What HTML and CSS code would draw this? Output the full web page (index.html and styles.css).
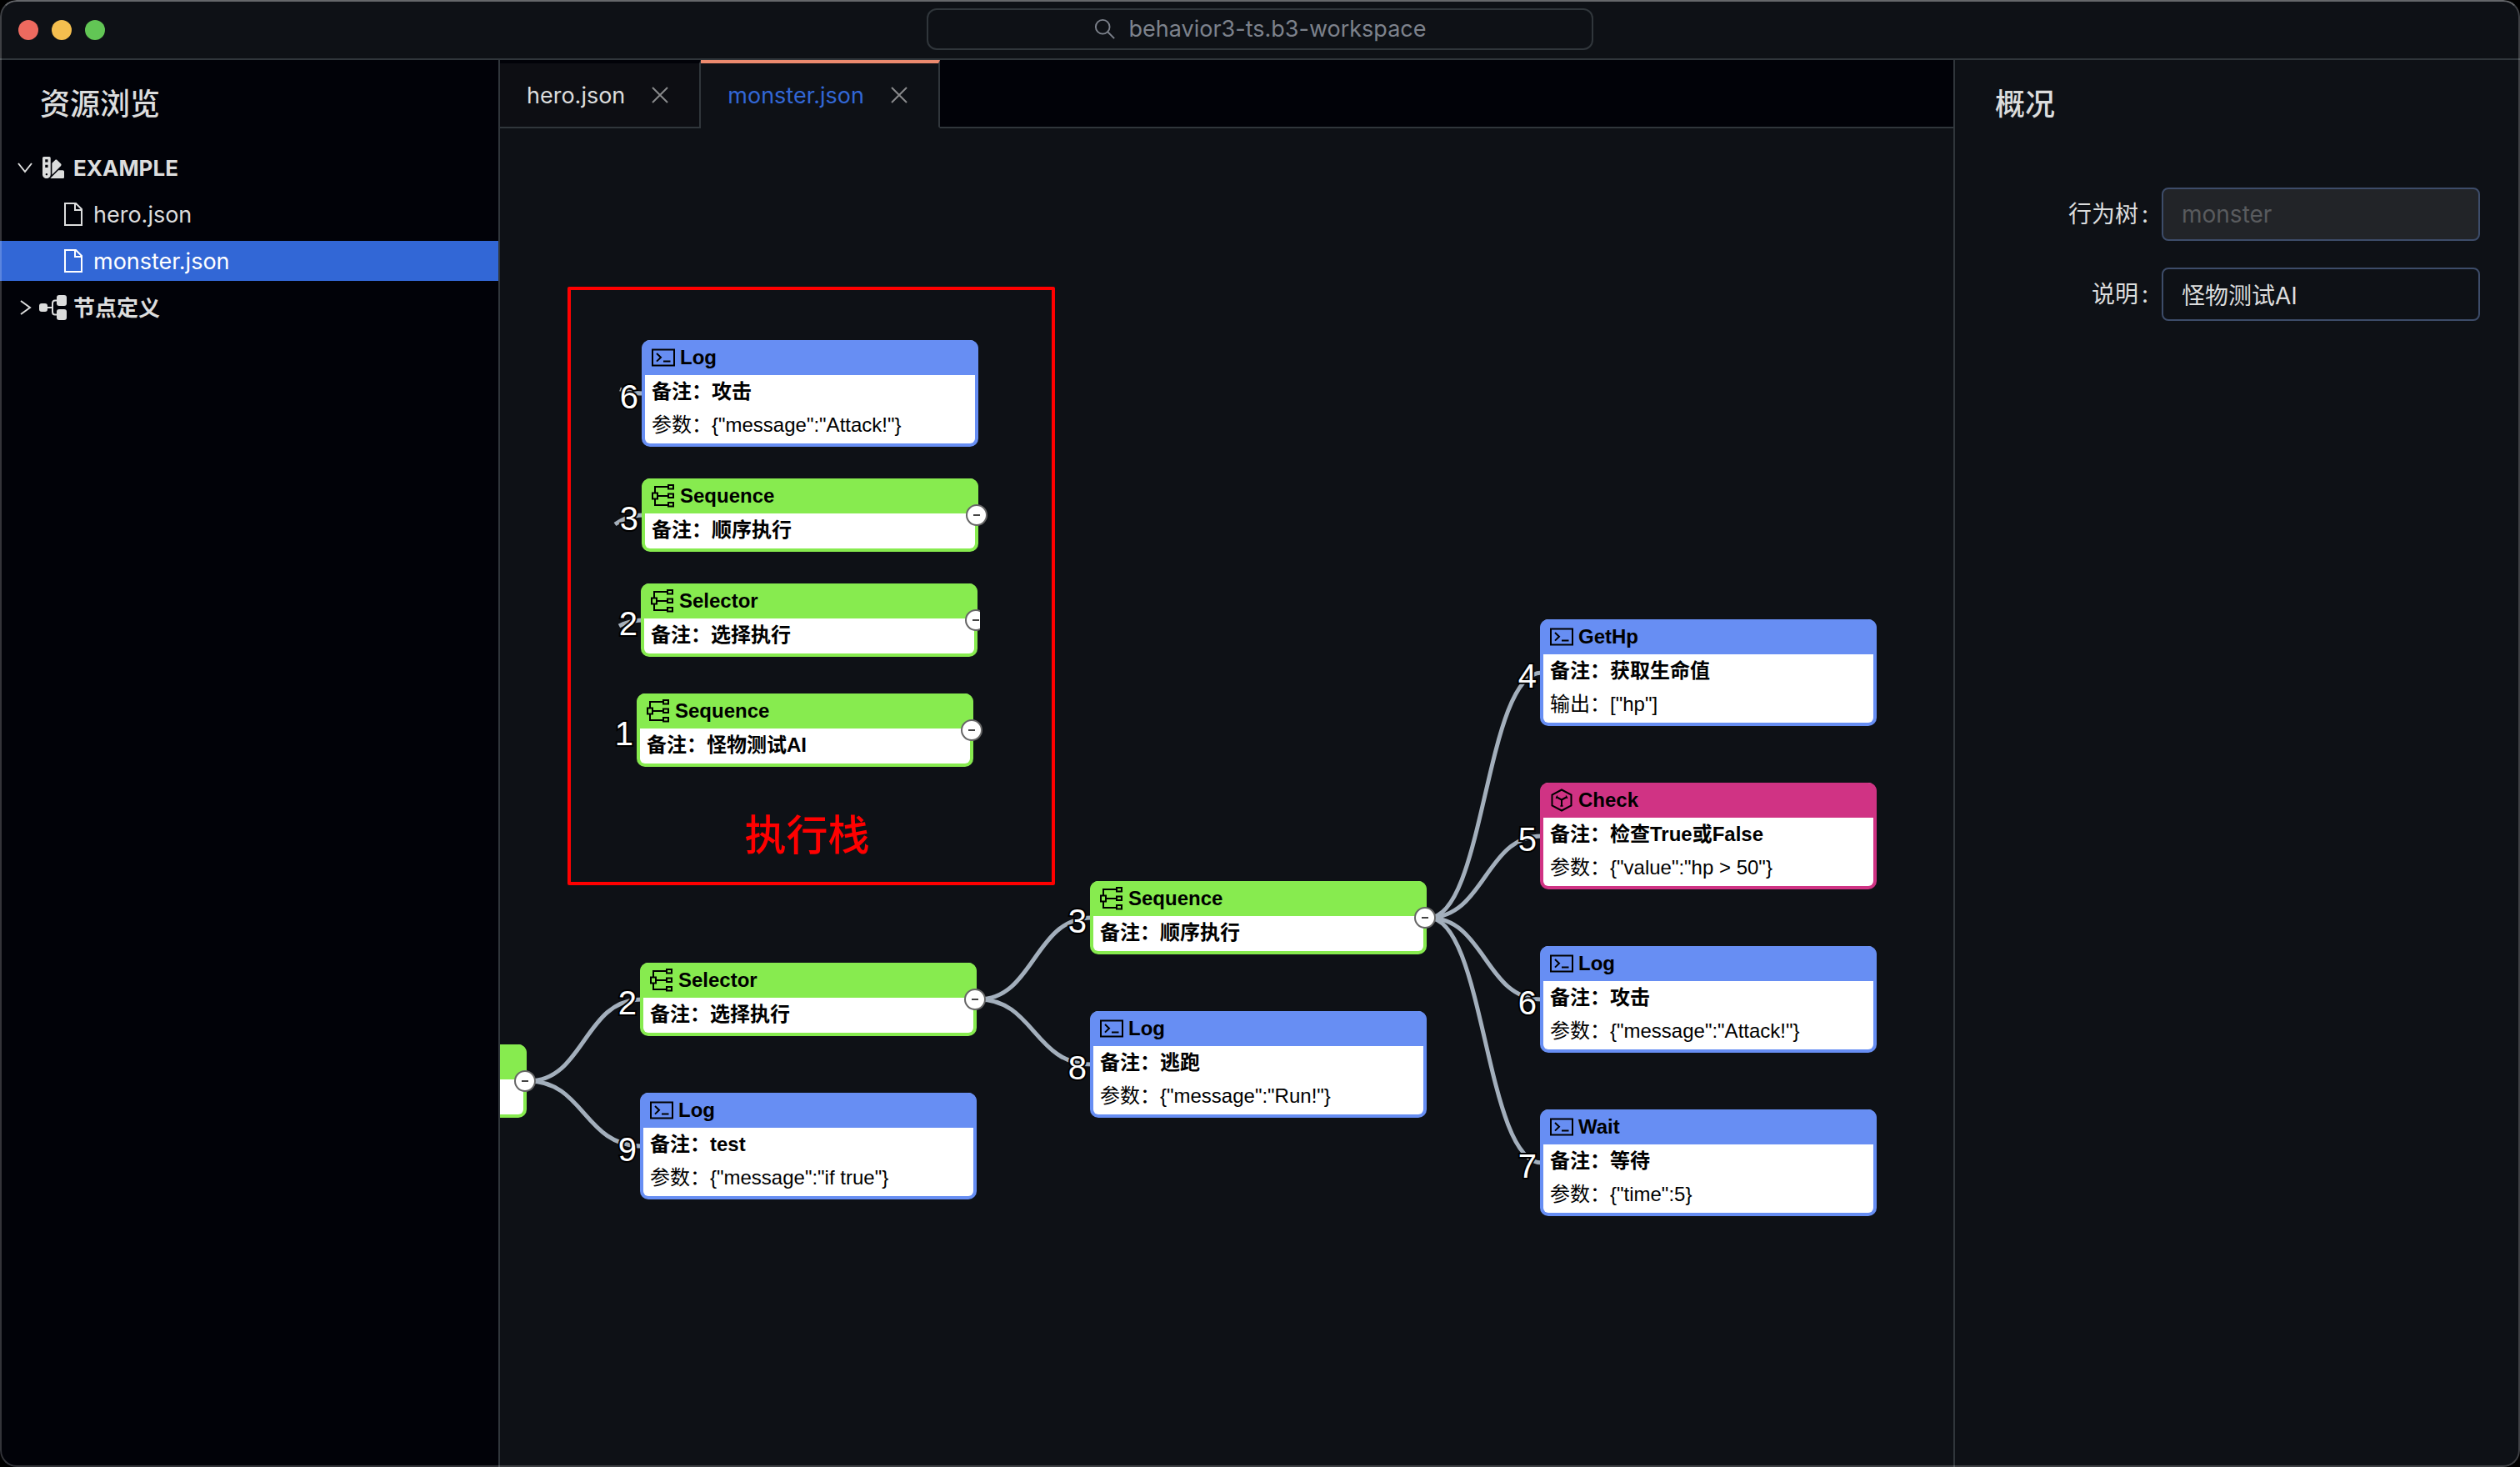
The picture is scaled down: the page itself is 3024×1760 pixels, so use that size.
FILE: index.html
```html
<!DOCTYPE html>
<html lang="zh-CN">
<head>
<meta charset="utf-8">
<title>behavior3-ts.b3-workspace</title>
<link rel="stylesheet" href="styles.css">
</head>
<body>
<svg class="sprite" aria-hidden="true">
  <symbol id="i-tree" viewBox="0 0 28 28">
    <path d="M8 14H20M4 10V3H20M4 18V25H20" />
    <path d="M1 10.500h6v7h-6zM20 1h6v4.500h-6zM20 11.500h6v4.500h-6zM20 22h6v4.500h-6z" />
  </symbol>
  <symbol id="i-console" viewBox="0 0 28 28">
    <path d="M1 4.500H27V23.500H1z" /><path d="M6 9l5 4.800-5 4.800M14 18.500h8.500" />
  </symbol>
  <symbol id="i-cube" viewBox="0 0 28 28">
    <path d="M14 1.500L25.500 7.500V20.500L14 26.500L2.500 20.500V7.500z" />
    <path d="M14 21.500V13.500L7.500 10M14 13.500L20.500 10" />
    <path d="M14 20.500v1M7.500 10l1 .500M20.500 10l-1 .500" stroke-width="4" />
  </symbol>
  <symbol id="i-file" viewBox="0 0 24 30">
    <path d="M2 2H15L22 9V28H2zM14 2V10H22" />
  </symbol>
  <symbol id="i-close" viewBox="0 0 20 20"><path d="M1 1L19 19M19 1L1 19" /></symbol>
</svg>

<div class="window">
  <header class="titlebar">
    <div class="lights"><i class="red"></i><i class="yellow"></i><i class="green"></i></div>
    <button class="search" type="button">
      <svg viewBox="0 0 28 28"><circle cx="11" cy="11" r="9" /><path d="M17.500 17.500L26 26" /></svg>
      <span>behavior3-ts.b3-workspace</span>
    </button>
    <div></div>
  </header>

  <div class="workbench">
    <nav class="explorer">
      <h1 class="pane-title">资源浏览</h1>
      <ul class="files">
        <li class="row folder">
          <svg class="arrow" viewBox="0 0 18 18"><path d="M1 4L9 14L17 4" /></svg>
          <svg class="glyph swatch" viewBox="0 0 512 512"><path fill-rule="evenodd" d="M0 32C0 14.300 14.300 0 32 0H160c17.700 0 32 14.300 32 32V416c0 53-43 96-96 96s-96-43-96-96V32zM223.600 425.900c.3-3.300.4-6.600.4-9.900V154l75.400-75.400c12.500-12.500 32.800-12.500 45.300 0l90.500 90.500c12.500 12.500 12.500 32.800 0 45.300L223.600 425.900zM182.800 512l192-192H480c17.700 0 32 14.300 32 32V480c0 17.700-14.300 32-32 32H182.800zM128 64H64v64h64V64zM64 192v64h64V192H64zM96 440a24 24 0 1 0 0-48 24 24 0 1 0 0 48z" /></svg>
          <span>EXAMPLE</span>
        </li>
        <li class="row file"><svg><use href="#i-file" /></svg><a href="#hero">hero.json</a></li>
        <li class="row file selected"><svg><use href="#i-file" /></svg><a href="#monster">monster.json</a></li>
        <li class="row folder">
          <svg class="arrow" viewBox="0 0 18 18"><path d="M4 1L15 9L4 17" /></svg>
          <svg class="glyph" viewBox="0 0 34 34">
            <rect x="0" y="12" width="10" height="10" rx="3" /><rect x="21" y="2" width="12" height="13" rx="3" /><rect x="21" y="19" width="12" height="13" rx="3" />
            <path class="wire" d="M9 17H16M22 8.500H19Q16 8.500 16 12V22Q16 25.500 19 25.500H22" />
          </svg>
          <span>节点定义</span>
        </li>
      </ul>
    </nav>

    <main class="editor">
      <div class="tabs" role="tablist">
        <div class="tab" role="tab"><span>hero.json</span><button type="button" aria-label="关闭 hero.json"><svg><use href="#i-close" /></svg></button></div>
        <div class="tab active" role="tab" aria-selected="true"><span>monster.json</span><button type="button" aria-label="关闭 monster.json"><svg><use href="#i-close" /></svg></button></div>
        <div class="tab-rest"></div>
      </div>

      <div class="canvas">
        <svg class="edges">
          <path d="M34 1143C101 1143 101 1045 170 1045" />
          <path d="M34 1143C101 1143 101 1221 170 1221" />
          <path d="M574 1045C641 1045 641 947 710 947" />
          <path d="M574 1045C641 1045 641 1123 710 1123" />
          <path d="M1114 947C1182 947 1182 653 1250 653" />
          <path d="M1114 947C1182 947 1182 849 1250 849" />
          <path d="M1114 947C1182 947 1182 1045 1250 1045" />
          <path d="M1114 947C1182 947 1182 1241 1250 1241" />
          <path d="M144 313Q158 318 172 318" />
          <path d="M138 475Q154 464 172 464" />
          <path d="M143 597Q156 590 172 590" />
        </svg>

        <section class="stack"><h2>执行栈</h2></section>

        <article class="node blue at-stack-log">
          <b class="order">6</b>
          <h3><svg><use href="#i-console" /></svg>Log</h3>
          <p class="note">备注：攻击</p><p>参数：{"message":"Attack!"}</p>
        </article>
        <article class="node green at-stack-sequence">
          <b class="order">3</b>
          <h3><svg><use href="#i-tree" /></svg>Sequence</h3>
          <p class="note">备注：顺序执行</p>
          <button class="fold" type="button" aria-label="收起"></button>
        </article>
        <article class="node green at-stack-selector">
          <b class="order">2</b>
          <h3><svg><use href="#i-tree" /></svg>Selector</h3>
          <p class="note">备注：选择执行</p>
          <button class="fold cut" type="button" aria-label="收起"></button>
        </article>
        <article class="node green at-stack-root">
          <b class="order">1</b>
          <h3><svg><use href="#i-tree" /></svg>Sequence</h3>
          <p class="note">备注：怪物测试AI</p>
          <button class="fold" type="button" aria-label="收起"></button>
        </article>

        <article class="node green at-root">
          <h3></h3>
          <p class="note"></p>
          <button class="fold" type="button" aria-label="收起"></button>
        </article>
        <article class="node green at-selector">
          <b class="order">2</b>
          <h3><svg><use href="#i-tree" /></svg>Selector</h3>
          <p class="note">备注：选择执行</p>
          <button class="fold" type="button" aria-label="收起"></button>
        </article>
        <article class="node blue at-test">
          <b class="order">9</b>
          <h3><svg><use href="#i-console" /></svg>Log</h3>
          <p class="note">备注：test</p><p>参数：{"message":"if true"}</p>
        </article>
        <article class="node green at-sequence">
          <b class="order">3</b>
          <h3><svg><use href="#i-tree" /></svg>Sequence</h3>
          <p class="note">备注：顺序执行</p>
          <button class="fold" type="button" aria-label="收起"></button>
        </article>
        <article class="node blue at-run">
          <b class="order">8</b>
          <h3><svg><use href="#i-console" /></svg>Log</h3>
          <p class="note">备注：逃跑</p><p>参数：{"message":"Run!"}</p>
        </article>
        <article class="node blue at-gethp">
          <b class="order">4</b>
          <h3><svg><use href="#i-console" /></svg>GetHp</h3>
          <p class="note">备注：获取生命值</p><p>输出：["hp"]</p>
        </article>
        <article class="node pink at-check">
          <b class="order">5</b>
          <h3><svg><use href="#i-cube" /></svg>Check</h3>
          <p class="note">备注：检查True或False</p><p>参数：{"value":"hp &gt; 50"}</p>
        </article>
        <article class="node blue at-attack">
          <b class="order">6</b>
          <h3><svg><use href="#i-console" /></svg>Log</h3>
          <p class="note">备注：攻击</p><p>参数：{"message":"Attack!"}</p>
        </article>
        <article class="node blue at-wait">
          <b class="order">7</b>
          <h3><svg><use href="#i-console" /></svg>Wait</h3>
          <p class="note">备注：等待</p><p>参数：{"time":5}</p>
        </article>
      </div>
    </main>

    <aside class="inspector">
      <h1 class="pane-title">概况</h1>
      <form class="fields">
        <label for="tree-name">行为树<span class="colon">:</span></label>
        <input id="tree-name" type="text" value="monster" disabled>
        <label for="tree-desc">说明<span class="colon">:</span></label>
        <input id="tree-desc" type="text" value="怪物测试AI">
      </form>
    </aside>
  </div>
</div>
</body>
</html>
```
FILE: styles.css
```css
* { box-sizing: border-box; margin: 0; padding: 0; }

body {
  background: #000;
  color: #dcdddd;
  font: 28px/44px Inter, "Noto Sans CJK SC", sans-serif;
}
button { background: none; border: 0; font: inherit; color: inherit; }
a { color: inherit; text-decoration: none; }
ul { list-style: none; }
svg { fill: none; stroke: currentColor; stroke-width: 2; flex: none; display: block; }
.sprite { position: absolute; width: 0; height: 0; }

.window {
  position: relative;
  display: flex;
  flex-direction: column;
  height: 100vh;
  overflow: hidden;
  border-radius: 20px;
  background: #0e1116;
}
.window::after {
  content: "";
  position: absolute;
  inset: 0;
  border: 2px solid rgba(255, 255, 255, .2);
  border-top-color: rgba(255, 255, 255, .36);
  border-radius: 20px;
  pointer-events: none;
}

/* title bar */
.titlebar {
  display: grid;
  grid-template-columns: 1fr 800px 1fr;
  align-items: center;
  height: 72px;
  flex: none;
  border-bottom: 2px solid #30363b;
}
.lights { display: flex; gap: 16px; padding: 2px 0 0 22px; }
.lights i { width: 24px; height: 24px; border-radius: 50%; }
.lights .red { background: #ed6a5f; }
.lights .yellow { background: #f5bf4f; }
.lights .green { background: #62c655; }
.search {
  display: flex;
  align-items: center;
  justify-content: center;
  gap: 16px;
  height: 50px;
  border: 2px solid #30363b;
  border-radius: 12px;
  color: #7d828c;
  font-size: 27px;
}
.search svg { width: 26px; height: 26px; }

.workbench { display: flex; flex: 1; min-height: 0; }

.pane-title {
  padding: 31px 48px 30px;
  font-size: 36px;
  line-height: 44px;
  font-weight: 500;
}

/* explorer */
.explorer { width: 600px; flex: none; background: #010208; border-right: 2px solid #30363b; }
.files { display: flex; flex-direction: column; gap: 8px; }
.row { display: flex; align-items: center; height: 48px; }
.row span, .row a { padding-top: 2px; }
.folder { padding-left: 21px; font-size: 26px; font-weight: 700; }
.folder span { padding-left: 7px; }
.arrow { width: 18px; height: 18px; }
.glyph { width: 34px; height: 34px; margin-left: 8px; fill: currentColor; stroke: none; }
.swatch { padding: 4px; }
.wire { fill: none; stroke: currentColor; stroke-width: 2; }
.file { gap: 12px; padding-left: 76px; font-size: 27px; }
.file svg { width: 24px; height: 30px; }
.selected { background: #3267d6; color: #fff; }

/* tabs */
.editor { display: flex; flex-direction: column; flex: 1; min-width: 0; }
.tabs { display: flex; height: 82px; flex: none; background: #010208; font-size: 27px; }
.tab {
  display: flex;
  align-items: center;
  gap: 32px;
  padding: 0 37px 0 32px;
  background: #0d0e13;
  border-top: 4px solid #010208;
  border-right: 2px solid #30363b;
  border-bottom: 2px solid #30363b;
}
.tab.active { background: #0e1116; border-top-color: #ec8a6e; border-bottom-color: #0e1116; color: #3267d6; }
.tab span { padding-top: 2px; }
.tab button { width: 20px; height: 20px; color: #8a8b8d; }
.tab svg { width: 20px; height: 20px; }
.tab-rest { flex: 1; border-bottom: 2px solid #30363b; }

/* tree canvas */
.canvas { position: relative; flex: 1; overflow: hidden; }
.edges { position: absolute; inset: 0; width: 100%; height: 100%; stroke: #a3afbc; stroke-width: 5; }
.stack {
  position: absolute;
  left: 81px;
  top: 190px;
  width: 585px;
  height: 718px;
  display: flex;
  align-items: flex-end;
  justify-content: center;
  padding: 0 10px 20px 0;
  border: 4px solid #f00;
  border-radius: 2px;
}
.stack h2 { color: #f00; font-size: 50px; line-height: 72px; font-weight: 500; }

.node {
  position: absolute;
  width: 404px;
  padding-bottom: 2px;
  border: 4px solid var(--tone);
  border-top: 0;
  border-radius: 10px;
  background: #fff;
  color: #000;
  font: 24px/40px "Liberation Sans", "Noto Sans CJK SC", sans-serif;
}
.node.blue { --tone: #678ef3; }
.node.green { --tone: #87eb4f; }
.node.pink { --tone: #d03384; }
.node h3 {
  display: flex;
  align-items: center;
  gap: 6px;
  height: 42px;
  margin: 0 -4px;
  padding: 0 12px;
  border-radius: 10px 10px 0 0;
  background: var(--tone);
  font-size: 24px;
}
.node svg { width: 28px; height: 28px; }
.node p { height: 40px; padding-left: 8px; white-space: nowrap; }
.node .note { font-weight: 700; }
.order {
  position: absolute;
  right: 404px;
  top: 50%;
  margin-top: -17px;
  color: #fff;
  font-size: 40px;
  line-height: 46px;
  font-weight: 400;
  -webkit-text-stroke: 4px #000;
  paint-order: stroke fill;
}
.fold {
  position: absolute;
  right: -15px;
  top: 50%;
  width: 26px;
  height: 26px;
  margin-top: -11px;
  display: grid;
  place-items: center;
  border: 2px solid #666;
  border-radius: 50%;
  background: #fff;
}
.fold::before { content: ""; width: 8px; height: 2px; background: #444; }
.fold.cut { clip-path: inset(0 8px 0 0); }

.at-stack-log { left: 170px; top: 254px; }
.at-stack-sequence { left: 170px; top: 420px; }
.at-stack-selector { left: 169px; top: 546px; }
.at-stack-root { left: 164px; top: 678px; }
.at-root { left: -372px; top: 1099px; }
.at-selector { left: 168px; top: 1001px; }
.at-test { left: 168px; top: 1157px; }
.at-sequence { left: 708px; top: 903px; }
.at-run { left: 708px; top: 1059px; }
.at-gethp { left: 1248px; top: 589px; }
.at-check { left: 1248px; top: 785px; }
.at-attack { left: 1248px; top: 981px; }
.at-wait { left: 1248px; top: 1177px; }

/* inspector */
.inspector { width: 680px; flex: none; border-left: 2px solid #30363b; }
.fields {
  display: grid;
  grid-template-columns: 1fr 382px;
  align-items: center;
  gap: 32px 12px;
  padding: 48px 48px 0;
}
.fields label { text-align: right; }
.colon { margin: 0 4px; }
.fields input {
  width: 100%;
  height: 64px;
  padding: 0 22px;
  border: 2px solid #3d4c69;
  border-radius: 8px;
  background: transparent;
  color: inherit;
  font: inherit;
}
.fields input:disabled { background: #222428; color: #595b5e; }
```
